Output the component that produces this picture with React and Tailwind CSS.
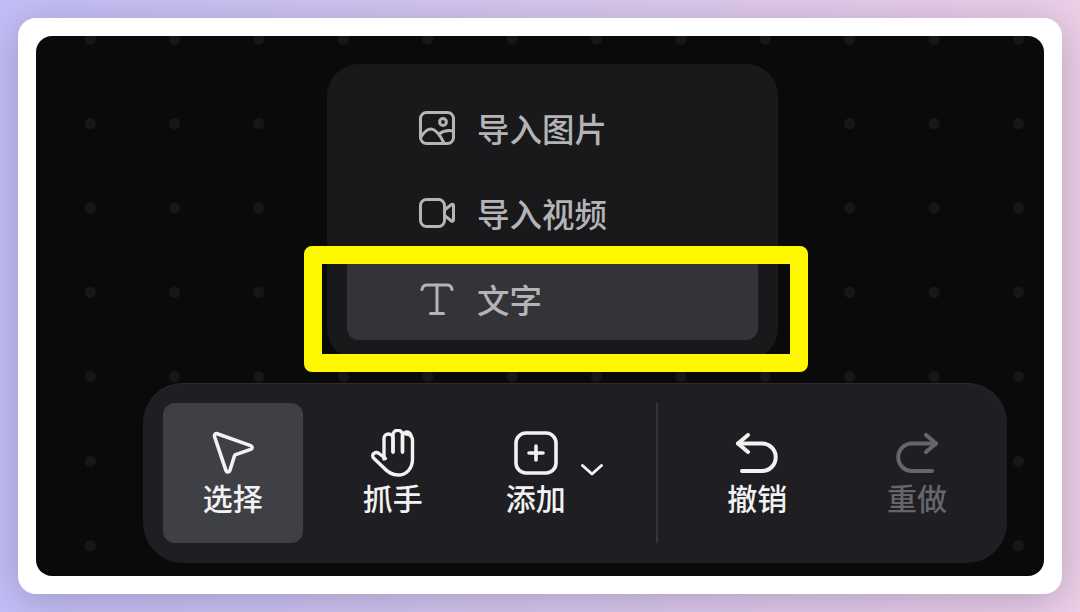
const font = "font-['Noto_Sans_CJK_SC','Noto_Sans',sans-serif]";

const ImageIcon = () => (
  <svg width="36" height="34" viewBox="0 0 36 34" fill="none" stroke="currentColor" strokeWidth="3" strokeLinecap="round" strokeLinejoin="round">
    <rect x="1.500" y="1.500" width="33" height="31" rx="6" />
    <circle cx="24" cy="11" r="3.400" />
    <path d="M2 26c3-5 6-8 10-8 5 0 9 6 13 14" />
    <path d="M20 23c4-3 9-4 14.500-3" />
  </svg>
);

const VideoIcon = () => (
  <svg width="36" height="30" viewBox="0 0 36 30" fill="none" stroke="currentColor" strokeWidth="3" strokeLinecap="round" strokeLinejoin="round">
    <rect x="1.500" y="1.500" width="24" height="27" rx="6" />
    <path d="M25.500 12l7-5.500c.8-.6 2-.1 2 1v14.500c0 1.100-1.200 1.600-2 1l-7-5.500z" />
  </svg>
);

const TextIcon = () => (
  <svg width="36" height="34" viewBox="0 0 36 34" fill="none" stroke="currentColor" strokeWidth="3" strokeLinecap="round" strokeLinejoin="round">
    <path d="M3 7.500C3.500 4.500 5 3 8 3h20c3 0 4.500 1.500 5 4.500" />
    <path d="M18 3v28.500" />
    <path d="M11.500 31.500h13" />
  </svg>
);

const PointerIcon = () => (
  <svg width="44" height="44" viewBox="0 0 44 44" fill="none" stroke="currentColor" strokeWidth="3.600" strokeLinejoin="round">
    <path d="M3.500 5.500c-.6-1.800 1-3.300 2.700-2.700l33.500 11.800c2 .7 1.900 3.200 0 3.800l-15 5.200c-.6.2-1 .6-1.200 1.200l-4.600 14.700c-.6 1.900-3.300 2-3.900.1z" />
  </svg>
);

const HandIcon = () => (
  <svg className="translate-y-[2px]" width="46" height="48" viewBox="0 0 46 48" fill="none" stroke="currentColor" strokeWidth="3.400" strokeLinecap="round" strokeLinejoin="round">
    <path d="M14 30V9.500a4.500 4.500 0 0 1 9 0V23" />
    <path d="M23 23V6a4.500 4.500 0 0 1 9.500 0v17" />
    <path d="M32.500 23V7a4 4 0 0 1 8.500 0.500" />
    <path d="M36 5c4 0 6.500 2.500 6.500 6v19c0 9.500-6 16-14.500 16-6.500 0-10.500-3-14.500-7.500l-9.500-9c-1.800-1.700-1.600-4-.2-5 1.500-1.200 3.600-1.200 5.200 0l6.500 5" />
  </svg>
);

const AddIcon = () => (
  <svg width="44" height="44" viewBox="0 0 44 44" fill="none" stroke="currentColor" strokeWidth="3.600" strokeLinecap="round">
    <rect x="2" y="2" width="40" height="40" rx="10" />
    <path d="M22 15v14M15 22h14" />
  </svg>
);

const UndoIcon = () => (
  <svg width="44" height="42" viewBox="0 0 44 42" fill="none" stroke="currentColor" strokeWidth="4" strokeLinecap="round" strokeLinejoin="round">
    <path d="M13 2L3 10.500l10 8.500" />
    <path d="M3 10.500h24a13.500 13.500 0 0 1 0 27.500H7" />
  </svg>
);

const RedoIcon = () => (
  <svg width="44" height="42" viewBox="0 0 44 42" fill="none" stroke="currentColor" strokeWidth="4" strokeLinecap="round" strokeLinejoin="round">
    <path d="M31 2l10 8.500L31 19" />
    <path d="M41 10.500H17a13.500 13.500 0 0 0 0 27.500h20" />
  </svg>
);

const menuItems = [
  { label: "导入图片", Icon: ImageIcon },
  { label: "导入视频", Icon: VideoIcon },
  { label: "文字", Icon: TextIcon, active: true },
];

const MenuItem = ({ label, Icon, active }) => (
  <div className={`h-[85.330px] rounded-xl flex items-center gap-[22px] pl-[72px] pt-[3px] text-[#b4b4b6] ${active ? "bg-[#343438]" : ""}`}>
    <Icon />
    <span className="text-[32.500px] leading-none font-medium">{label}</span>
  </div>
);

const ToolButton = ({ label, Icon, active, className = "text-[#f2f2f2]" }) => (
  <div className={`w-[140px] h-[140px] rounded-xl flex flex-col items-center justify-end pb-[31px] ${active ? "bg-[#3f4045]" : ""} ${className}`}>
    <Icon />
    <span className="text-[30px] leading-none mt-[7px] font-medium">{label}</span>
  </div>
);

export default function App() {
  return (
    <div className={`w-[1080px] h-[612px] p-[18px] bg-gradient-to-r from-[#c3bff7] to-[#edd0e8] overflow-hidden ${font}`}>
      <div className="w-[1044px] h-[576px] p-[18px] bg-white rounded-[18px] shadow-[0_6px_40px_rgba(60,50,80,0.3)]">
        <div className="w-[1008px] h-[540px] pt-[28px] rounded-[16px] bg-[#0a0a0a] bg-[radial-gradient(circle,#171717_5px,transparent_6px)] bg-[length:84.400px_84.400px] bg-[position:12px_-39px] overflow-hidden">
          <div className="relative ml-[291px] w-[451px] h-[296px] p-5 rounded-[32px] bg-[#19191b]">
            {menuItems.map((item) => (
              <MenuItem key={item.label} {...item} />
            ))}
            <div className="absolute left-[-23px] top-[182px] w-[504px] h-[126px] border-[18px] border-[#fff700] rounded-lg" />
          </div>
          <div className="ml-[107px] mt-[23px] w-[864px] h-[180px] pt-[19px] px-5 flex rounded-[40px] bg-[#1e1e23] border-t border-[#2c2c31]">
            <ToolButton label="选择" Icon={PointerIcon} active />
            <div className="ml-5">
              <ToolButton label="抓手" Icon={HandIcon} />
            </div>
            <div className="ml-5 w-[140px] h-[140px] flex items-start text-[#f2f2f2]">
              <div className="w-[106px] flex justify-center">
                <ToolButton label="添加" Icon={AddIcon} />
              </div>
              <svg className="ml-[-9px] mt-[60px] shrink-0" width="24" height="14" viewBox="0 0 24 14" fill="none" stroke="currentColor" strokeWidth="3" strokeLinecap="round" strokeLinejoin="round">
                <path d="M2.500 2.500L12 11l9.500-8.500" />
              </svg>
            </div>
            <div className="ml-[34px] mr-[29px] w-[2px] h-[140px] bg-[#34343a]" />
            <ToolButton label="撤销" Icon={UndoIcon} />
            <div className="ml-5">
              <ToolButton label="重做" Icon={RedoIcon} className="text-[#66666a]" />
            </div>
          </div>
        </div>
      </div>
    </div>
  );
}
